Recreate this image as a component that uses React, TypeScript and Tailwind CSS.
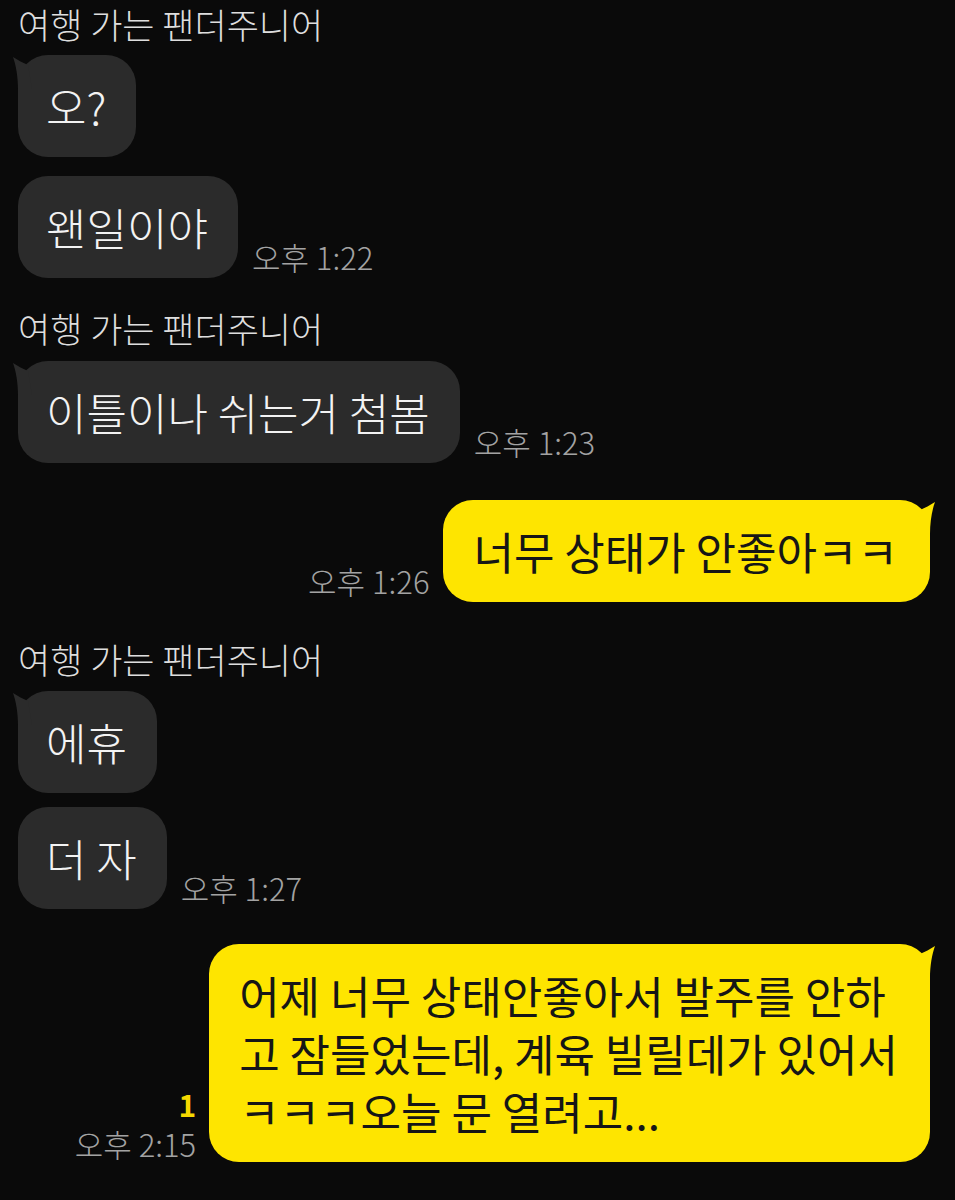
import React from "react";

const fontKR = "font-['Noto_Sans_CJK_KR','Noto_Sans',sans-serif]";

function Tail({ mine }: { mine?: boolean }) {
  return (
    <svg
      viewBox="0 0 24 34"
      className={
        mine
          ? "absolute -right-[6px] top-0 h-[34px] w-[24px] -scale-x-100 fill-[#fee500]"
          : "absolute -left-[6px] top-0 h-[34px] w-[24px] fill-[#2b2b2b]"
      }
    >
      <path d="M1 2 C6 5 11 8 16 10 L20 34 L6 34 C6 22 4 10 1 2 Z" />
    </svg>
  );
}

function Bubble({ mine, tail, children }: { mine?: boolean; tail?: boolean; children: React.ReactNode }) {
  return (
    <div
      className={
        mine
          ? "relative whitespace-nowrap rounded-[30px] bg-[#fee500] py-[22px] pl-[30px] pr-[32px] text-[44px] font-normal leading-[58px] text-[#161616]"
          : "relative whitespace-nowrap rounded-[30px] bg-[#2b2b2b] py-[22px] pl-[28px] pr-[30px] text-[44px] font-light leading-[58px] text-[#f3f3f3]"
      }
    >
      {tail && <Tail mine={mine} />}
      {children}
    </div>
  );
}

function Time({ children, low }: { children: React.ReactNode; low?: boolean }) {
  return (
    <span
      className={
        low
          ? "mb-[3px] whitespace-nowrap text-[31px] font-light leading-none text-[#a3a3a3]"
          : "mb-[6px] whitespace-nowrap text-[31px] font-light leading-none text-[#a3a3a3]"
      }
    >
      {children}
    </span>
  );
}

function Name() {
  return <div className="text-[35px] font-light leading-[44px] text-[#dedede]">여행 가는 팬더주니어</div>;
}

export default function App() {
  return (
    <div className={`min-h-screen w-full bg-[#0a0a0a] pl-[18px] pr-[25px] pt-[2px] ${fontKR}`}>
      <Name />

      <div className="mt-[9px] flex">
        <Bubble tail>오?</Bubble>
      </div>
      <div className="mt-[19px] flex items-end gap-[14px]">
        <Bubble>왠일이야</Bubble>
        <Time>오후 1:22</Time>
      </div>

      <div className="mt-[28px]">
        <Name />
      </div>
      <div className="mt-[11px] flex items-end gap-[14px]">
        <Bubble tail>이틀이나 쉬는거 첨봄</Bubble>
        <Time>오후 1:23</Time>
      </div>

      <div className="mt-[37px] flex items-end justify-end gap-[14px]">
        <Time>오후 1:26</Time>
        <Bubble mine tail>
          너무 상태가 안좋아ㅋㅋ
        </Bubble>
      </div>

      <div className="mt-[35px]">
        <Name />
      </div>
      <div className="mt-[10px] flex">
        <Bubble tail>에휴</Bubble>
      </div>
      <div className="mt-[14px] flex items-end gap-[14px]">
        <Bubble>더 자</Bubble>
        <Time>오후 1:27</Time>
      </div>

      <div className="mt-[35px] flex items-end justify-end gap-[13px]">
        <div className="flex flex-col items-end">
          <span className="mb-[9px] text-[30px] font-semibold leading-none text-[#f5d800]">1</span>
          <Time low>오후 2:15</Time>
        </div>
        <Bubble mine tail>
          어제 너무 상태안좋아서 발주를 안하
          <br />
          고 잠들었는데, 계육 빌릴데가 있어서
          <br />
          ㅋㅋㅋ오늘 문 열려고...
        </Bubble>
      </div>
    </div>
  );
}
